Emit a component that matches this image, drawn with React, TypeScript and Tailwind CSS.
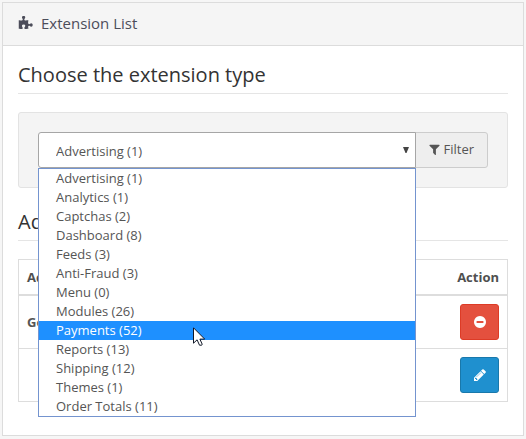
import { useState } from "react";

const extensionTypes = [
  "Advertising (1)",
  "Analytics (1)",
  "Captchas (2)",
  "Dashboard (8)",
  "Feeds (3)",
  "Anti-Fraud (3)",
  "Menu (0)",
  "Modules (26)",
  "Payments (52)",
  "Reports (13)",
  "Shipping (12)",
  "Themes (1)",
  "Order Totals (11)",
];

const icons = {
  puzzle:
    "M1755 1083q0 81-44.5 135t-123.5 54q-41 0-77.5-17.5t-59-38-56.5-38-71-17.5q-110 0-110 124 0 39 16 115t15 115v5q-22 0-33 1-34 3-97.5 11.5t-115.5 13.5-98 5q-61 0-103-26.5t-42-83.5q0-37 17.5-71t38-56.5 38-59 17.5-77.5q0-79-54-123.5t-135-44.5q-84 0-143 45.5t-59 127.5q0 43 15 83t33.5 64.5 33.5 53 15 50.5q0 45-46 89-37 35-117 35-95 0-245-24-9-2-27.5-4t-27.5-4l-13-2q-1 0-3-1-2 0-2-1v-1024q2 1 17.5 3.5t34 5 21.5 3.5q150 24 245 24 80 0 117-35 46-44 46-89 0-22-15-50.5t-33.5-53-33.5-64.5-15-83q0-82 59-127.5t144-45.5q80 0 134 44.5t54 123.5q0 41-17.5 77.5t-38 59-38 56.5-17.5 71q0 57 42 83.5t103 26.5q64 0 180-15t163-17v2q-1 2-3.5 17.5t-5 34-3.5 21.5q-24 150-24 245 0 80 35 117 44 46 89 46 22 0 50.5-15t53-33.5 64.5-33.5 83-15q82 0 127.5 59t45.5 143z",
  filter:
    "M1595 295q17 41-14 70l-493 493v742q0 42-39 59-13 5-25 5-27 0-45-19l-256-256q-19-19-19-45v-486l-493-493q-31-29-14-70 17-39 59-39h1280q42 0 59 39z",
  minus:
    "M1344 960v-128q0-26-19-45t-45-19h-768q-26 0-45 19t-19 45v128q0 26 19 45t45 19h768q26 0 45-19t19-45zm320-64q0 209-103 385.5t-279.5 279.5-385.5 103-385.5-103-279.5-279.5-103-385.5 103-385.5 279.5-279.5 385.5-103 385.5 103 279.5 279.5 103 385.5z",
  pencil:
    "M491 1536l91-91-235-235-91 91v107h128v128h107zm523-928q0-22-22-22-10 0-17 7l-542 542q-7 7-7 17 0 22 22 22 10 0 17-7l542-542q7-7 7-17zm-54-192l416 416-832 832h-416v-416zm683 96q0 53-37 90l-166 166-416-416 166-165q36-38 90-38 53 0 91 38l235 234q37 39 37 91z",
};

function Icon({ name, className }: { name: keyof typeof icons; className: string }) {
  return (
    <svg viewBox="0 0 1792 1792" fill="currentColor" className={className} aria-hidden="true">
      <path d={icons[name]} />
    </svg>
  );
}

function TypePicker() {
  const [selected, setSelected] = useState(extensionTypes[0]);
  const [active, setActive] = useState("Payments (52)");

  return (
    <div className="relative min-w-0 flex-1">
      <select
        aria-label="Choose the extension type"
        value={selected}
        onChange={(e) => setSelected(e.target.value)}
        className="block h-9 w-full appearance-none rounded-l-[3px] border border-[#a6a6a6] bg-white pt-0.5 pr-8 pl-[17px] text-[13px] text-[#555] outline-none"
      >
        {extensionTypes.map((type) => (
          <option key={type}>{type}</option>
        ))}
      </select>
      <svg viewBox="0 0 6 6" className="pointer-events-none absolute top-[15px] right-[7px] size-[6px]" aria-hidden="true">
        <path d="M0 0h6L3.5 6h-1z" fill="#444" />
      </svg>
      <ul role="listbox" aria-label="Extension types" className="absolute inset-x-0 top-full border border-[#7494cf] bg-white">
        {extensionTypes.map((type) => (
          <li
            key={type}
            role="option"
            aria-selected={type === active}
            onMouseEnter={() => setActive(type)}
            onClick={() => setSelected(type)}
            className={
              type === active
                ? "relative h-[19px] bg-[#1e90ff] pl-[17px] leading-[19px] text-white"
                : "h-[19px] pl-[17px] leading-[19px]"
            }
          >
            {type}
            {type === "Payments (52)" && (
              <svg viewBox="0 0 12 19" className="absolute top-[6px] left-[154px] z-10 h-[19px] w-3" aria-hidden="true">
                <path
                  d="M.5.8v15.4l3.6-3.4 2.4 5.4h2.2l.5-1-2.3-5.1h4.8z"
                  fill="#fff"
                  stroke="#111827"
                  strokeWidth="1"
                />
              </svg>
            )}
          </li>
        ))}
      </ul>
    </div>
  );
}

function SectionTitle({ children }: { children: string }) {
  return <h2 className="border-b border-[#e5e5e5] pb-[7px] text-[20px] leading-[22px] text-[#333]">{children}</h2>;
}

export default function App() {
  return (
    <div className="bg-[#f6f6f6] px-[2px] pt-[2px] pb-[3px] font-['Open_Sans','Noto_Sans',sans-serif] text-[13px] leading-5 text-[#555]">
      <main className="border border-[#dcdcdc] bg-white">
        <header className="flex h-[43px] items-center gap-2 border-b border-[#dcdcdc] bg-[#f5f5f5] px-[15px] pb-0.5 text-[#4c4d5a]">
          <Icon name="puzzle" className="size-[15px]" />
          <h1 className="text-[15px] leading-5">Extension List</h1>
        </header>
        <div className="px-[15px] pt-[18px] pb-[33px]">
          <SectionTitle>Choose the extension type</SectionTitle>
          <div className="mt-[18px] flex rounded-[3px] border border-[#e3e3e3] bg-[#f4f4f4] p-[19px]">
            <TypePicker />
            <button
              type="button"
              className="-ml-px flex h-9 items-center gap-0.5 rounded-r-[3px] border border-[#ccc] bg-[#eee] pr-[13px] pb-0.5 pl-3"
            >
              <Icon name="filter" className="size-[13px]" />
              Filter
            </button>
          </div>
          <div className="mt-[23px]">
            <SectionTitle>Advertising</SectionTitle>
          </div>
          <table className="mt-[18px] w-full border-collapse border border-[#ddd]">
            <thead>
              <tr className="h-[35px] border-b-2 border-[#ddd] text-[#4f4f4f]">
                <th scope="col" className="px-2 text-left font-bold">
                  Advertising Name
                </th>
                <th scope="col" className="px-2 text-right font-bold">
                  Action
                </th>
              </tr>
            </thead>
            <tbody>
              <tr className="border-b border-[#ddd]">
                <td className="p-2 font-bold">Google Shopping</td>
                <td className="p-2">
                  <button
                    type="button"
                    aria-label="Uninstall"
                    className="ml-auto flex h-9 w-[39px] items-center justify-center rounded-[3px] border border-[#dd3b26] bg-[#e4503e] text-white"
                  >
                    <Icon name="minus" className="size-[14px]" />
                  </button>
                </td>
              </tr>
              <tr>
                <td className="py-2 pr-2 pl-6">Your Store</td>
                <td className="p-2">
                  <button
                    type="button"
                    aria-label="Edit"
                    className="ml-auto flex h-9 w-[39px] items-center justify-center rounded-[3px] border border-[#1978ab] bg-[#1f90cf] text-white"
                  >
                    <Icon name="pencil" className="size-[14px]" />
                  </button>
                </td>
              </tr>
            </tbody>
          </table>
        </div>
      </main>
    </div>
  );
}
